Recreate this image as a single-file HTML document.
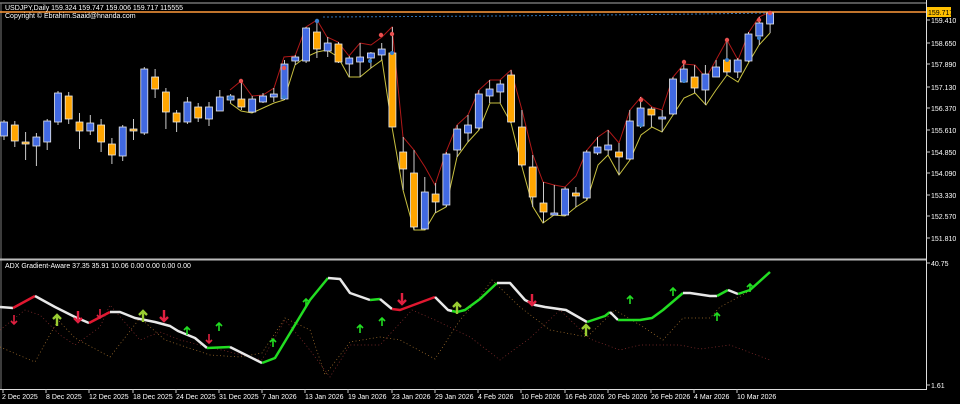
<!DOCTYPE html>
<html><head><meta charset="utf-8"><style>
html,body{margin:0;padding:0;background:#000;width:960px;height:404px;overflow:hidden}
svg{display:block}
text{font-family:"Liberation Sans",sans-serif;font-size:7px;fill:#fff}
.c line{stroke:#ccc;stroke-width:1}
.b{fill:#4169e1;stroke:#e8e8e8;stroke-width:.8}
.o{fill:#ffa500;stroke:#e8e8e8;stroke-width:.8}
</style></head><body>
<svg width="960" height="404" viewBox="0 0 960 404">
<rect width="960" height="404" fill="#000"/>
<line x1="0" y1="3" x2="926" y2="3" stroke="#aaa" stroke-width="1"/>
<line x1="1" y1="3" x2="1" y2="389" stroke="#777" stroke-width="1"/>
<line x1="926.5" y1="0" x2="926.5" y2="390" stroke="#ddd" stroke-width="1"/>
<line x1="0" y1="259.5" x2="926" y2="259.5" stroke="#bbb" stroke-width="2"/>
<line x1="0" y1="389.5" x2="927" y2="389.5" stroke="#ddd" stroke-width="1"/>
<g>
<line x1="926" y1="20" x2="930" y2="20" stroke="#ccc"/><text x="931" y="23">159.410</text>
<line x1="926" y1="43" x2="930" y2="43" stroke="#ccc"/><text x="931" y="46">158.650</text>
<line x1="926" y1="64" x2="930" y2="64" stroke="#ccc"/><text x="931" y="67">157.890</text>
<line x1="926" y1="87" x2="930" y2="87" stroke="#ccc"/><text x="931" y="90">157.130</text>
<line x1="926" y1="108" x2="930" y2="108" stroke="#ccc"/><text x="931" y="111">156.370</text>
<line x1="926" y1="130" x2="930" y2="130" stroke="#ccc"/><text x="931" y="133">155.610</text>
<line x1="926" y1="152" x2="930" y2="152" stroke="#ccc"/><text x="931" y="155">154.850</text>
<line x1="926" y1="173" x2="930" y2="173" stroke="#ccc"/><text x="931" y="176">154.090</text>
<line x1="926" y1="195" x2="930" y2="195" stroke="#ccc"/><text x="931" y="198">153.330</text>
<line x1="926" y1="216" x2="930" y2="216" stroke="#ccc"/><text x="931" y="219">152.570</text>
<line x1="926" y1="238" x2="930" y2="238" stroke="#ccc"/><text x="931" y="241">151.810</text>
<line x1="926" y1="263" x2="930" y2="263" stroke="#ccc"/><text x="931" y="266">40.75</text>
<line x1="926" y1="385" x2="930" y2="385" stroke="#ccc"/><text x="931" y="388">1.61</text>
</g>
<line x1="0" y1="12" x2="926" y2="12" stroke="#ff9a3a" stroke-width="1.5"/>
<rect x="927" y="7" width="24" height="10" fill="#ffc000"/>
<text x="928" y="15" style="fill:#000">159.717</text>
<polyline points="323,17 500,16 700,14 770,13" fill="none" stroke="#2f6fb0" stroke-width="1" stroke-dasharray="2,2"/>
<text x="5" y="10">USDJPY,Daily  159.324 159.747 159.006 159.717  115555</text>
<text x="5" y="18">Copyright © Ebrahim.Saaid@hnanda.com</text>
<polyline fill="none" stroke="#b01818" stroke-width="1" points="230,90 241,81 252,96 263,95 274,88 284,57 295,56 306,27 317,20 327,37 338,42 349,56 360,43 371,45 382,37 392,27 403,137 414,150 425,167 435,185 446,152 457,125 468,115 479,90 490,80 500,80 511,70 522,110 533,155 543,182 554,185 565,187 576,176 587,150 598,137 608,130 619,143 630,110 641,97 652,107 662,110 673,77 684,64 695,65 706,78 716,60 727,40 738,60 749,32 759,17 770,12"/>
<polyline fill="none" stroke="#c8c040" stroke-width="1" points="230,103 241,111 252,113 263,108 274,103 284,100 295,65 306,57 317,52 327,50 338,57 349,77 360,77 371,68 382,60 392,127 403,190 414,230 425,230 435,213 446,207 457,157 468,142 479,130 490,103 500,103 511,123 522,167 533,207 543,223 554,215 565,216 576,207 587,200 598,165 608,155 619,175 630,160 641,135 652,127 662,132 673,115 684,98 695,93 706,105 716,90 727,75 738,82 749,62 759,45 770,33"/>
<g class="c">
<line x1="4" y1="120" x2="4" y2="140"/><rect class="b" x="0.5" y="122" width="7" height="14"/>
<line x1="14.8" y1="121" x2="14.8" y2="147"/><rect class="o" x="11.3" y="125" width="7" height="16"/>
<line x1="25.6" y1="132" x2="25.6" y2="160"/><rect class="o" x="22.1" y="142" width="7" height="2"/>
<line x1="36.4" y1="133" x2="36.4" y2="166"/><rect class="b" x="32.9" y="137" width="7" height="9"/>
<line x1="47.2" y1="119" x2="47.2" y2="150"/><rect class="b" x="43.7" y="121" width="7" height="21"/>
<line x1="58" y1="91" x2="58" y2="125"/><rect class="b" x="54.5" y="93" width="7" height="29"/>
<line x1="68.7" y1="92" x2="68.7" y2="124"/><rect class="o" x="65.2" y="96" width="7" height="23"/>
<line x1="79.5" y1="113" x2="79.5" y2="149"/><rect class="o" x="76" y="122" width="7" height="9"/>
<line x1="90.3" y1="115" x2="90.3" y2="135"/><rect class="b" x="86.8" y="123" width="7" height="8"/>
<line x1="101.1" y1="119" x2="101.1" y2="152"/><rect class="o" x="97.6" y="125" width="7" height="17"/>
<line x1="111.9" y1="138" x2="111.9" y2="164"/><rect class="o" x="108.4" y="144" width="7" height="11"/>
<line x1="122.7" y1="125" x2="122.7" y2="161"/><rect class="b" x="119.2" y="127" width="7" height="29"/>
<line x1="133.5" y1="119" x2="133.5" y2="140"/><rect class="o" x="130" y="129" width="7" height="2"/>
<line x1="144.3" y1="67" x2="144.3" y2="135"/><rect class="b" x="140.8" y="69" width="7" height="64"/>
<line x1="155.1" y1="69" x2="155.1" y2="98"/><rect class="o" x="151.6" y="77" width="7" height="12"/>
<line x1="165.9" y1="88" x2="165.9" y2="129"/><rect class="o" x="162.4" y="92" width="7" height="20"/>
<line x1="176.6" y1="110" x2="176.6" y2="132"/><rect class="o" x="173.1" y="113" width="7" height="9"/>
<line x1="187.4" y1="97" x2="187.4" y2="124"/><rect class="b" x="183.9" y="102" width="7" height="20"/>
<line x1="198.2" y1="103" x2="198.2" y2="122"/><rect class="o" x="194.7" y="107" width="7" height="11"/>
<line x1="209" y1="102" x2="209" y2="126"/><rect class="b" x="205.5" y="107" width="7" height="12"/>
<line x1="219.8" y1="90" x2="219.8" y2="111"/><rect class="b" x="216.3" y="97" width="7" height="14"/>
<line x1="230.6" y1="94" x2="230.6" y2="103"/><rect class="b" x="227.1" y="96" width="7" height="4"/>
<line x1="241.4" y1="80" x2="241.4" y2="110"/><rect class="o" x="237.9" y="99" width="7" height="8"/>
<line x1="252.2" y1="96" x2="252.2" y2="113"/><rect class="b" x="248.7" y="99" width="7" height="13"/>
<line x1="263" y1="93" x2="263" y2="103"/><rect class="b" x="259.5" y="96" width="7" height="6"/>
<line x1="273.8" y1="88" x2="273.8" y2="102"/><rect class="b" x="270.3" y="94" width="7" height="3"/>
<line x1="284.5" y1="60" x2="284.5" y2="100"/><rect class="b" x="281" y="64" width="7" height="35"/>
<line x1="295.3" y1="55" x2="295.3" y2="65"/><rect class="b" x="291.8" y="57" width="7" height="4"/>
<line x1="306.1" y1="27" x2="306.1" y2="63"/><rect class="b" x="302.6" y="28" width="7" height="33"/>
<line x1="316.9" y1="20" x2="316.9" y2="58"/><rect class="o" x="313.4" y="32" width="7" height="17"/>
<line x1="327.7" y1="37" x2="327.7" y2="57"/><rect class="b" x="324.2" y="43" width="7" height="8"/>
<line x1="338.5" y1="42" x2="338.5" y2="63"/><rect class="o" x="335" y="44" width="7" height="18"/>
<line x1="349.3" y1="56" x2="349.3" y2="77"/><rect class="b" x="345.8" y="58" width="7" height="6"/>
<line x1="360.1" y1="43" x2="360.1" y2="77"/><rect class="b" x="356.6" y="57" width="7" height="5"/>
<line x1="370.9" y1="52" x2="370.9" y2="68"/><rect class="b" x="367.4" y="53" width="7" height="5"/>
<line x1="381.7" y1="43" x2="381.7" y2="60"/><rect class="b" x="378.2" y="49" width="7" height="6"/>
<line x1="392.4" y1="27" x2="392.4" y2="127"/><rect class="o" x="388.9" y="53" width="7" height="74"/>
<line x1="403.2" y1="137" x2="403.2" y2="190"/><rect class="o" x="399.7" y="152" width="7" height="17"/>
<line x1="414" y1="150" x2="414" y2="230"/><rect class="o" x="410.5" y="173" width="7" height="54"/>
<line x1="424.8" y1="177" x2="424.8" y2="230"/><rect class="b" x="421.3" y="192" width="7" height="37"/>
<line x1="435.6" y1="183" x2="435.6" y2="213"/><rect class="o" x="432.1" y="194" width="7" height="8"/>
<line x1="446.4" y1="152" x2="446.4" y2="207"/><rect class="b" x="442.9" y="154" width="7" height="51"/>
<line x1="457.2" y1="125" x2="457.2" y2="157"/><rect class="b" x="453.7" y="129" width="7" height="21"/>
<line x1="468" y1="115" x2="468" y2="142"/><rect class="b" x="464.5" y="125" width="7" height="8"/>
<line x1="478.8" y1="90" x2="478.8" y2="130"/><rect class="b" x="475.3" y="94" width="7" height="34"/>
<line x1="489.6" y1="80" x2="489.6" y2="103"/><rect class="b" x="486.1" y="89" width="7" height="7"/>
<line x1="500.3" y1="80" x2="500.3" y2="103"/><rect class="b" x="496.8" y="84" width="7" height="8"/>
<line x1="511.1" y1="70" x2="511.1" y2="123"/><rect class="o" x="507.6" y="75" width="7" height="47"/>
<line x1="521.9" y1="110" x2="521.9" y2="167"/><rect class="o" x="518.4" y="127" width="7" height="38"/>
<line x1="532.7" y1="155" x2="532.7" y2="207"/><rect class="o" x="529.2" y="167" width="7" height="30"/>
<line x1="543.5" y1="182" x2="543.5" y2="223"/><rect class="o" x="540" y="203" width="7" height="9"/>
<line x1="554.3" y1="185" x2="554.3" y2="215"/><rect class="b" x="550.8" y="213" width="7" height="2"/>
<line x1="565.1" y1="187" x2="565.1" y2="216"/><rect class="b" x="561.6" y="189" width="7" height="26"/>
<line x1="575.9" y1="187" x2="575.9" y2="207"/><rect class="o" x="572.4" y="193" width="7" height="3"/>
<line x1="586.7" y1="150" x2="586.7" y2="200"/><rect class="b" x="583.2" y="152" width="7" height="46"/>
<line x1="597.5" y1="137" x2="597.5" y2="155"/><rect class="b" x="594" y="147" width="7" height="6"/>
<line x1="608.2" y1="130" x2="608.2" y2="155"/><rect class="b" x="604.7" y="145" width="7" height="5"/>
<line x1="619" y1="143" x2="619" y2="175"/><rect class="o" x="615.5" y="152" width="7" height="5"/>
<line x1="629.8" y1="110" x2="629.8" y2="160"/><rect class="b" x="626.3" y="121" width="7" height="38"/>
<line x1="640.6" y1="97" x2="640.6" y2="128"/><rect class="b" x="637.1" y="108" width="7" height="18"/>
<line x1="651.4" y1="107" x2="651.4" y2="127"/><rect class="o" x="647.9" y="109" width="7" height="6"/>
<line x1="662.2" y1="110" x2="662.2" y2="132"/><rect class="b" x="658.7" y="117" width="7" height="2"/>
<line x1="673" y1="77" x2="673" y2="115"/><rect class="b" x="669.5" y="79" width="7" height="35"/>
<line x1="683.8" y1="63" x2="683.8" y2="83"/><rect class="b" x="680.3" y="69" width="7" height="13"/>
<line x1="694.6" y1="65" x2="694.6" y2="93"/><rect class="o" x="691.1" y="77" width="7" height="11"/>
<line x1="705.4" y1="65" x2="705.4" y2="105"/><rect class="b" x="701.9" y="74" width="7" height="16"/>
<line x1="716.1" y1="60" x2="716.1" y2="77"/><rect class="b" x="712.6" y="67" width="7" height="10"/>
<line x1="726.9" y1="40" x2="726.9" y2="75"/><rect class="o" x="723.4" y="60" width="7" height="12"/>
<line x1="737.7" y1="58" x2="737.7" y2="78"/><rect class="b" x="734.2" y="60" width="7" height="12"/>
<line x1="748.5" y1="32" x2="748.5" y2="62"/><rect class="b" x="745" y="34" width="7" height="27"/>
<line x1="759.3" y1="17" x2="759.3" y2="45"/><rect class="b" x="755.8" y="23" width="7" height="13"/>
<line x1="770.1" y1="12" x2="770.1" y2="33"/><rect class="b" x="766.6" y="13" width="7" height="11"/>
</g>
<g>
<circle cx="241" cy="81" r="2.2" fill="#e85050"/><circle cx="230" cy="98" r="2.2" fill="#3a80d0"/>
<circle cx="284" cy="68" r="2.2" fill="#e85050"/><circle cx="284" cy="97" r="2" fill="#3a80d0"/>
<circle cx="317" cy="21" r="2.2" fill="#3a80d0"/><circle cx="381" cy="35" r="2.2" fill="#e85050"/>
<circle cx="392" cy="34" r="2.2" fill="#e85050"/><circle cx="392" cy="53" r="2" fill="#3a80d0"/>
<circle cx="370" cy="61" r="2" fill="#3a80d0"/><circle cx="641" cy="100" r="2.2" fill="#e85050"/>
<circle cx="684" cy="62" r="2.2" fill="#e85050"/><circle cx="684" cy="81" r="2" fill="#3a80d0"/>
<circle cx="727" cy="40" r="2.2" fill="#e85050"/><circle cx="727" cy="60" r="2" fill="#3a80d0"/>
<circle cx="759" cy="20" r="2.2" fill="#e85050"/><circle cx="759" cy="38" r="2" fill="#3a80d0"/>
<circle cx="770" cy="13" r="2.2" fill="#e85050"/><circle cx="641" cy="125" r="2" fill="#3a80d0"/>
</g>
<text x="5" y="268">ADX Gradient-Aware 37.35 35.91 10.06 0.00 0.00 0.00 0.00</text>
<polyline fill="none" stroke="#b07830" stroke-width="0.7" stroke-dasharray="1,2.5" points="0,347 35,362 58,320 75,338 110,357 140,318 165,340 210,355 240,357 262,353 285,318 310,330 325,375 350,342 380,337 400,340 435,359 460,320 480,297 492,280 520,307 550,330 587,337 615,310 640,325 663,340 683,318 710,318 720,307 750,291"/>
<polyline fill="none" stroke="#903030" stroke-width="0.7" stroke-dasharray="1,2.5" points="0,330 25,310 40,315 60,335 75,345 100,327 110,305 140,340 160,332 180,340 200,345 230,352 262,360 285,320 306,345 330,377 350,345 380,345 412,310 435,320 470,337 500,360 530,338 560,310 590,339 620,350 640,345 680,345 700,349 730,345 770,360"/>
<g fill="none" stroke-width="2.5" stroke-linejoin="round">
<polyline stroke="#e8e8e8" points="0,307 13,308"/>
<polyline stroke="#e01830" points="13,308 35,296"/>
<polyline stroke="#e8e8e8" points="35,296 55,307 75,317 89,323"/>
<polyline stroke="#e01830" points="89,323 110,312"/>
<polyline stroke="#e8e8e8" points="110,312 120,312 135,318 155,322 170,326 178,331 195,338 207,348"/>
<polyline stroke="#22dd22" points="207,348 230,347"/>
<polyline stroke="#e8e8e8" points="230,347 262,363"/>
<polyline stroke="#22dd22" points="262,363 275,358 310,300 328,278"/>
<polyline stroke="#e8e8e8" points="328,278 340,279 350,293 370,300"/>
<polyline stroke="#22dd22" points="370,300 380,299"/>
<polyline stroke="#e8e8e8" points="380,299 392,309"/>
<polyline stroke="#e01830" points="392,309 400,310 435,297"/>
<polyline stroke="#e8e8e8" points="435,297 448,310 452,311"/>
<polyline stroke="#22dd22" points="452,311 457,312 465,310 480,299 497,283"/>
<polyline stroke="#e8e8e8" points="497,283 510,283 525,300 535,305 545,307 566,310 587,322"/>
<polyline stroke="#22dd22" points="587,322 605,316 610,312"/>
<polyline stroke="#e8e8e8" points="610,312 618,320"/>
<polyline stroke="#22dd22" points="618,320 640,320 652,318 663,310 683,293"/>
<polyline stroke="#e8e8e8" points="683,293 690,293 710,296 717,296"/>
<polyline stroke="#22dd22" points="717,296 728,290"/>
<polyline stroke="#e8e8e8" points="728,290 738,294"/>
<polyline stroke="#22dd22" points="738,294 750,290 770,272"/>
</g>
<g stroke-width="1.6" fill="none">
<g stroke="#e02040"><path d="M14,315v9M11,321l3,3l3,-3"/><path d="M209,334v9M206,340l3,3l3,-3"/><path d="M100,309v9M97,315l3,3l3,-3"/></g>
<g stroke="#e02040" stroke-width="2.4"><path d="M78,311v11M74,318l4,4l4,-4"/><path d="M164,310v11M160,317l4,4l4,-4"/><path d="M402,293v11M398,300l4,4l4,-4"/><path d="M532,294v11M528,301l4,4l4,-4"/></g>
<g stroke="#9acd32" stroke-width="2.4"><path d="M57,326v-11M53,319l4,-4l4,4"/><path d="M143,322v-11M139,315l4,-4l4,4"/><path d="M457,314v-11M453,307l4,-4l4,4"/><path d="M586,336v-11M582,329l4,-4l4,4"/></g>
<g stroke="#22dd22"><path d="M187,335v-8M184,330l3,-3l3,3"/><path d="M219,331v-8M216,326l3,-3l3,3"/><path d="M273,347v-8M270,342l3,-3l3,3"/><path d="M306,307v-8M303,302l3,-3l3,3"/><path d="M360,333v-8M357,328l3,-3l3,3"/><path d="M382,326v-8M379,321l3,-3l3,3"/><path d="M630,304v-8M627,299l3,-3l3,3"/><path d="M673,296v-8M670,291l3,-3l3,3"/><path d="M717,321v-8M714,316l3,-3l3,3"/><path d="M750,292v-8M747,287l3,-3l3,3"/></g>
</g>
<g stroke="#ccc">
<line x1="3" y1="389" x2="3" y2="393"/><line x1="46" y1="389" x2="46" y2="393"/><line x1="89" y1="389" x2="89" y2="393"/><line x1="133" y1="389" x2="133" y2="393"/><line x1="176" y1="389" x2="176" y2="393"/><line x1="219" y1="389" x2="219" y2="393"/><line x1="262" y1="389" x2="262" y2="393"/><line x1="305" y1="389" x2="305" y2="393"/><line x1="348" y1="389" x2="348" y2="393"/><line x1="392" y1="389" x2="392" y2="393"/><line x1="435" y1="389" x2="435" y2="393"/><line x1="478" y1="389" x2="478" y2="393"/><line x1="521" y1="389" x2="521" y2="393"/><line x1="565" y1="389" x2="565" y2="393"/><line x1="608" y1="389" x2="608" y2="393"/><line x1="651" y1="389" x2="651" y2="393"/><line x1="694" y1="389" x2="694" y2="393"/><line x1="737" y1="389" x2="737" y2="393"/>
</g>
<g>
<text x="2" y="399">2 Dec 2025</text><text x="46" y="399">8 Dec 2025</text><text x="89" y="399">12 Dec 2025</text><text x="133" y="399">18 Dec 2025</text><text x="176" y="399">24 Dec 2025</text><text x="219" y="399">31 Dec 2025</text><text x="262" y="399">7 Jan 2026</text><text x="305" y="399">13 Jan 2026</text><text x="348" y="399">19 Jan 2026</text><text x="392" y="399">23 Jan 2026</text><text x="435" y="399">29 Jan 2026</text><text x="478" y="399">4 Feb 2026</text><text x="521" y="399">10 Feb 2026</text><text x="565" y="399">16 Feb 2026</text><text x="608" y="399">20 Feb 2026</text><text x="651" y="399">26 Feb 2026</text><text x="694" y="399">4 Mar 2026</text><text x="737" y="399">10 Mar 2026</text>
</g>
</svg>
</body></html>
